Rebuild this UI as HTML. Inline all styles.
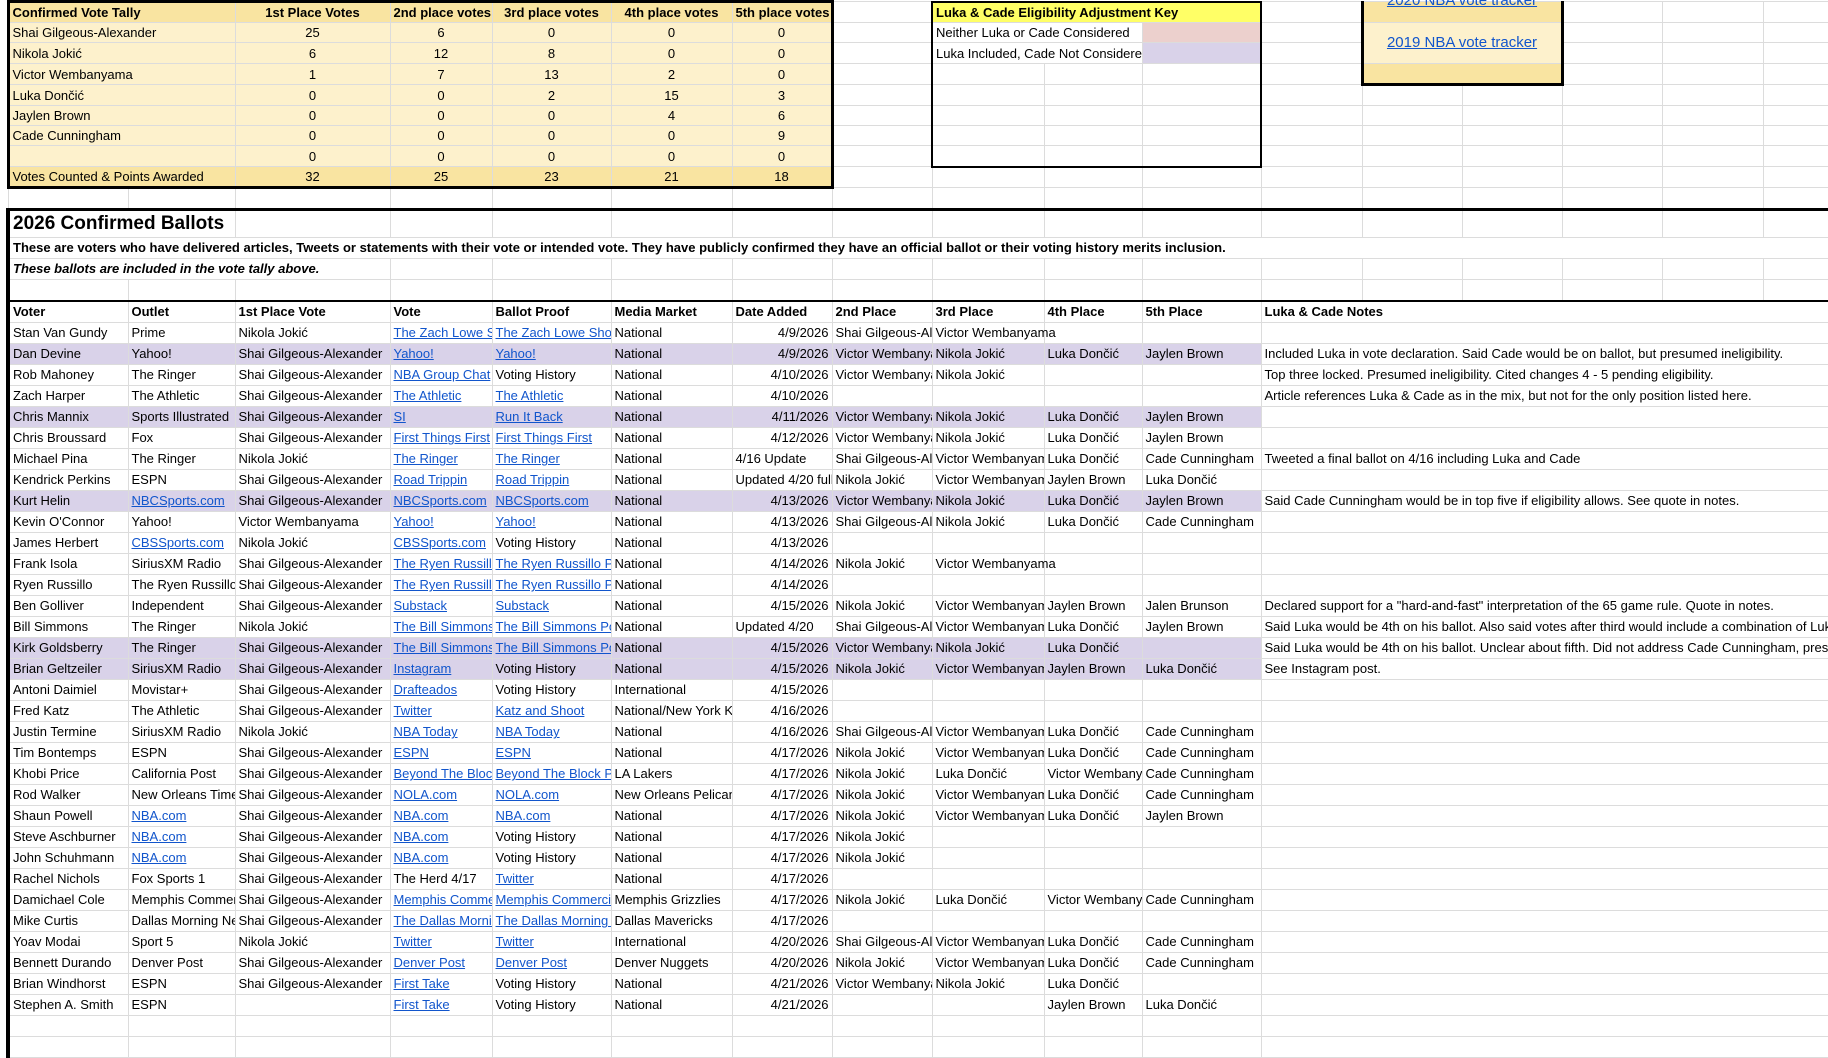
<!DOCTYPE html>
<html><head><meta charset="utf-8">
<style>
body{margin:0;width:1828px;height:1050px;overflow:hidden;background:#fff;position:relative}
table{position:absolute;left:6px;top:0;border-collapse:collapse;table-layout:fixed;width:1822px}
td{height:20px;border:1px solid #dcdcdc;padding:0 3px;white-space:nowrap;overflow:hidden;font:13px "Liberation Sans",Arial,sans-serif;line-height:20px;color:#000;vertical-align:bottom}
tr.tp td{height:19.2px;line-height:19px}
.l{color:#1155cc;text-decoration:underline}
.r{text-align:right}.c{text-align:center}.b{font-weight:bold}.i{font-style:italic}
.o{overflow:visible}
.dy{background:#f9e4a1}.ly{background:#fdf1cc}
.ky{background:#ffff66}
.pk{background:#ecd0cd}.lv{background:#d9d2e9}
.v td{background:#d9d2e9}.v td.n{background:#fff}
.tl{border-left:3px solid #000}.tr{border-right:3px solid #000}.tt{border-top:3px solid #000}.tb{border-bottom:3px solid #000}
.kl{border-left:2px solid #000}.kr{border-right:2px solid #000}.kt{border-top:2px solid #000}.kb{border-bottom:2px solid #000}
.L{border-left:4px solid #000}
.title td{height:26px;border-top:3px solid #000;vertical-align:middle}
.hd td{border-top:2px solid #000;font-weight:bold}
</style></head><body>
<table>
<colgroup><col style="width:120px"><col style="width:107px"><col style="width:155px"><col style="width:102px"><col style="width:119px"><col style="width:121px"><col style="width:100px"><col style="width:100px"><col style="width:112px"><col style="width:98px"><col style="width:119px"><col style="width:101px"><col style="width:100px"><col style="width:100px"><col style="width:100px"><col style="width:101px"><col style="width:67px"></colgroup>
<tr class="tp"><td colspan="2" class="dy b tl tt">Confirmed Vote Tally</td><td class="dy b c tt">1st Place Votes</td><td class="dy b tt">2nd place votes</td><td class="dy b c tt">3rd place votes</td><td class="dy b c tt">4th place votes</td><td class="dy b tt tr">5th place votes</td><td></td><td colspan="3" class="ky b kl kr kt">Luka &amp; Cade Eligibility Adjustment Key</td><td></td><td colspan="2" class="dy c tl tr" style="overflow:visible"><span class="l" style="font-size:15px;position:relative;top:-12px">2020 NBA vote tracker</span></td><td></td><td></td><td></td></tr>
<tr class="tp"><td colspan="2" class="ly tl">Shai Gilgeous-Alexander</td><td class="ly c">25</td><td class="ly c">6</td><td class="ly c">0</td><td class="ly c">0</td><td class="ly c tr">0</td><td></td><td colspan="2" class="kl">Neither Luka or Cade Considered</td><td class="pk kr"></td><td></td><td colspan="2" rowspan="2" class="ly c tl tr" style="vertical-align:middle"><span class="l" style="font-size:15px">2019 NBA vote tracker</span></td><td></td><td></td><td></td></tr>
<tr class="tp"><td colspan="2" class="ly tl">Nikola Jokić</td><td class="ly c">6</td><td class="ly c">12</td><td class="ly c">8</td><td class="ly c">0</td><td class="ly c tr">0</td><td></td><td colspan="2" class="kl">Luka Included, Cade Not Considered</td><td class="lv kr"></td><td></td><td></td><td></td><td></td></tr>
<tr class="tp"><td colspan="2" class="ly tl">Victor Wembanyama</td><td class="ly c">1</td><td class="ly c">7</td><td class="ly c">13</td><td class="ly c">2</td><td class="ly c tr">0</td><td></td><td class="kl"></td><td></td><td class="kr"></td><td></td><td colspan="2" class="dy tl tr tb"></td><td></td><td></td><td></td></tr>
<tr class="tp"><td colspan="2" class="ly tl">Luka Dončić</td><td class="ly c">0</td><td class="ly c">0</td><td class="ly c">2</td><td class="ly c">15</td><td class="ly c tr">3</td><td></td><td class="kl"></td><td></td><td class="kr"></td><td></td><td></td><td></td><td></td><td></td><td></td></tr>
<tr class="tp"><td colspan="2" class="ly tl">Jaylen Brown</td><td class="ly c">0</td><td class="ly c">0</td><td class="ly c">0</td><td class="ly c">4</td><td class="ly c tr">6</td><td></td><td class="kl"></td><td></td><td class="kr"></td><td></td><td></td><td></td><td></td><td></td><td></td></tr>
<tr class="tp"><td colspan="2" class="ly tl">Cade Cunningham</td><td class="ly c">0</td><td class="ly c">0</td><td class="ly c">0</td><td class="ly c">0</td><td class="ly c tr">9</td><td></td><td class="kl"></td><td></td><td class="kr"></td><td></td><td></td><td></td><td></td><td></td><td></td></tr>
<tr class="tp"><td colspan="2" class="ly tl"></td><td class="ly c">0</td><td class="ly c">0</td><td class="ly c">0</td><td class="ly c">0</td><td class="ly c tr">0</td><td></td><td class="kl kb"></td><td class="kb"></td><td class="kr kb"></td><td></td><td></td><td></td><td></td><td></td><td></td></tr>
<tr class="tp"><td colspan="2" class="dy tl tb">Votes Counted &amp; Points Awarded</td><td class="dy c tb">32</td><td class="dy c tb">25</td><td class="dy c tb">23</td><td class="dy c tb">21</td><td class="dy c tr tb">18</td><td></td><td></td><td></td><td></td><td></td><td></td><td></td><td></td><td></td><td></td></tr>
<tr class="tp"><td></td><td></td><td></td><td></td><td></td><td></td><td></td><td></td><td></td><td></td><td></td><td></td><td></td><td></td><td></td><td></td><td></td></tr>
<tr class="title"><td colspan="2" class="L b o" style="font-size:19px">2026 Confirmed Ballots</td><td></td><td></td><td></td><td></td><td></td><td></td><td></td><td></td><td></td><td></td><td></td><td></td><td></td><td></td><td></td></tr>
<tr><td colspan="17" class="L b">These are voters who have delivered articles, Tweets or statements with their vote or intended vote. They have publicly confirmed they have an official ballot or their voting history merits inclusion.</td></tr>
<tr><td colspan="3" class="L b i">These ballots are included in the vote tally above.</td><td></td><td></td><td></td><td></td><td></td><td></td><td></td><td></td><td></td><td></td><td></td><td></td><td></td><td></td></tr>
<tr><td class="L"></td><td></td><td></td><td></td><td></td><td></td><td></td><td></td><td></td><td></td><td></td><td></td><td></td><td></td><td></td><td></td><td></td></tr>
<tr class="hd"><td class="L">Voter</td><td>Outlet</td><td>1st Place Vote</td><td>Vote</td><td>Ballot Proof</td><td>Media Market</td><td>Date Added</td><td>2nd Place</td><td>3rd Place</td><td>4th Place</td><td>5th Place</td><td colspan="7">Luka &amp; Cade Notes</td></tr>

<tr><td class="L">Stan Van Gundy</td><td>Prime</td><td>Nikola Jokić</td><td class="l">The Zach Lowe Show</td><td class="l">The Zach Lowe Show</td><td>National</td><td class="r">4/9/2026</td><td>Shai Gilgeous-Alexander</td><td class="o">Victor Wembanyama</td><td></td><td></td><td colspan="7"></td></tr>
<tr class="v"><td class="L">Dan Devine</td><td>Yahoo!</td><td>Shai Gilgeous-Alexander</td><td class="l">Yahoo!</td><td class="l">Yahoo!</td><td>National</td><td class="r">4/9/2026</td><td>Victor Wembanyama</td><td>Nikola Jokić</td><td>Luka Dončić</td><td>Jaylen Brown</td><td colspan="7" class="n">Included Luka in vote declaration. Said Cade would be on ballot, but presumed ineligibility.</td></tr>
<tr><td class="L">Rob Mahoney</td><td>The Ringer</td><td>Shai Gilgeous-Alexander</td><td class="l">NBA Group Chat</td><td>Voting History</td><td>National</td><td class="r">4/10/2026</td><td>Victor Wembanyama</td><td>Nikola Jokić</td><td></td><td></td><td colspan="7">Top three locked. Presumed ineligibility. Cited changes 4 - 5 pending eligibility.</td></tr>
<tr><td class="L">Zach Harper</td><td>The Athletic</td><td>Shai Gilgeous-Alexander</td><td class="l">The Athletic</td><td class="l">The Athletic</td><td>National</td><td class="r">4/10/2026</td><td></td><td></td><td></td><td></td><td colspan="7">Article references Luka &amp; Cade as in the mix, but not for the only position listed here.</td></tr>
<tr class="v"><td class="L">Chris Mannix</td><td>Sports Illustrated</td><td>Shai Gilgeous-Alexander</td><td class="l">SI</td><td class="l">Run It Back</td><td>National</td><td class="r">4/11/2026</td><td>Victor Wembanyama</td><td>Nikola Jokić</td><td>Luka Dončić</td><td>Jaylen Brown</td><td colspan="7" class="n"></td></tr>
<tr><td class="L">Chris Broussard</td><td>Fox</td><td>Shai Gilgeous-Alexander</td><td class="l">First Things First</td><td class="l">First Things First</td><td>National</td><td class="r">4/12/2026</td><td>Victor Wembanyama</td><td>Nikola Jokić</td><td>Luka Dončić</td><td>Jaylen Brown</td><td colspan="7"></td></tr>
<tr><td class="L">Michael Pina</td><td>The Ringer</td><td>Nikola Jokić</td><td class="l">The Ringer</td><td class="l">The Ringer</td><td>National</td><td>4/16 Update</td><td>Shai Gilgeous-Alexander</td><td>Victor Wembanyama</td><td>Luka Dončić</td><td>Cade Cunningham</td><td colspan="7">Tweeted a final ballot on 4/16 including Luka and Cade</td></tr>
<tr><td class="L">Kendrick Perkins</td><td>ESPN</td><td>Shai Gilgeous-Alexander</td><td class="l">Road Trippin</td><td class="l">Road Trippin</td><td>National</td><td>Updated 4/20 full ballot</td><td>Nikola Jokić</td><td>Victor Wembanyama</td><td>Jaylen Brown</td><td>Luka Dončić</td><td colspan="7"></td></tr>
<tr class="v"><td class="L">Kurt Helin</td><td class="l">NBCSports.com</td><td>Shai Gilgeous-Alexander</td><td class="l">NBCSports.com</td><td class="l">NBCSports.com</td><td>National</td><td class="r">4/13/2026</td><td>Victor Wembanyama</td><td>Nikola Jokić</td><td>Luka Dončić</td><td>Jaylen Brown</td><td colspan="7" class="n">Said Cade Cunningham would be in top five if eligibility allows. See quote in notes.</td></tr>
<tr><td class="L">Kevin O'Connor</td><td>Yahoo!</td><td>Victor Wembanyama</td><td class="l">Yahoo!</td><td class="l">Yahoo!</td><td>National</td><td class="r">4/13/2026</td><td>Shai Gilgeous-Alexander</td><td>Nikola Jokić</td><td>Luka Dončić</td><td>Cade Cunningham</td><td colspan="7"></td></tr>
<tr><td class="L">James Herbert</td><td class="l">CBSSports.com</td><td>Nikola Jokić</td><td class="l">CBSSports.com</td><td>Voting History</td><td>National</td><td class="r">4/13/2026</td><td></td><td></td><td></td><td></td><td colspan="7"></td></tr>
<tr><td class="L">Frank Isola</td><td>SiriusXM Radio</td><td>Shai Gilgeous-Alexander</td><td class="l">The Ryen Russillo Podcast</td><td class="l">The Ryen Russillo Podcast</td><td>National</td><td class="r">4/14/2026</td><td>Nikola Jokić</td><td class="o">Victor Wembanyama</td><td></td><td></td><td colspan="7"></td></tr>
<tr><td class="L">Ryen Russillo</td><td>The Ryen Russillo Podcast</td><td>Shai Gilgeous-Alexander</td><td class="l">The Ryen Russillo Podcast</td><td class="l">The Ryen Russillo Podcast</td><td>National</td><td class="r">4/14/2026</td><td></td><td></td><td></td><td></td><td colspan="7"></td></tr>
<tr><td class="L">Ben Golliver</td><td>Independent</td><td>Shai Gilgeous-Alexander</td><td class="l">Substack</td><td class="l">Substack</td><td>National</td><td class="r">4/15/2026</td><td>Nikola Jokić</td><td>Victor Wembanyama</td><td>Jaylen Brown</td><td>Jalen Brunson</td><td colspan="7">Declared support for a "hard-and-fast" interpretation of the 65 game rule. Quote in notes.</td></tr>
<tr><td class="L">Bill Simmons</td><td>The Ringer</td><td>Nikola Jokić</td><td class="l">The Bill Simmons Podcast</td><td class="l">The Bill Simmons Podcast</td><td>National</td><td>Updated 4/20</td><td>Shai Gilgeous-Alexander</td><td>Victor Wembanyama</td><td>Luka Dončić</td><td>Jaylen Brown</td><td colspan="7">Said Luka would be 4th on his ballot. Also said votes after third would include a combination of Luka and Cade</td></tr>
<tr class="v"><td class="L">Kirk Goldsberry</td><td>The Ringer</td><td>Shai Gilgeous-Alexander</td><td class="l">The Bill Simmons Podcast</td><td class="l">The Bill Simmons Podcast</td><td>National</td><td class="r">4/15/2026</td><td>Victor Wembanyama</td><td>Nikola Jokić</td><td>Luka Dončić</td><td></td><td colspan="7" class="n">Said Luka would be 4th on his ballot. Unclear about fifth. Did not address Cade Cunningham, presumably</td></tr>
<tr class="v"><td class="L">Brian Geltzeiler</td><td>SiriusXM Radio</td><td>Shai Gilgeous-Alexander</td><td class="l">Instagram</td><td>Voting History</td><td>National</td><td class="r">4/15/2026</td><td>Nikola Jokić</td><td>Victor Wembanyama</td><td>Jaylen Brown</td><td>Luka Dončić</td><td colspan="7" class="n">See Instagram post.</td></tr>
<tr><td class="L">Antoni Daimiel</td><td>Movistar+</td><td>Shai Gilgeous-Alexander</td><td class="l">Drafteados</td><td>Voting History</td><td>International</td><td class="r">4/15/2026</td><td></td><td></td><td></td><td></td><td colspan="7"></td></tr>
<tr><td class="L">Fred Katz</td><td>The Athletic</td><td>Shai Gilgeous-Alexander</td><td class="l">Twitter</td><td class="l">Katz and Shoot</td><td>National/New York Knicks</td><td class="r">4/16/2026</td><td></td><td></td><td></td><td></td><td colspan="7"></td></tr>
<tr><td class="L">Justin Termine</td><td>SiriusXM Radio</td><td>Nikola Jokić</td><td class="l">NBA Today</td><td class="l">NBA Today</td><td>National</td><td class="r">4/16/2026</td><td>Shai Gilgeous-Alexander</td><td>Victor Wembanyama</td><td>Luka Dončić</td><td>Cade Cunningham</td><td colspan="7"></td></tr>
<tr><td class="L">Tim Bontemps</td><td>ESPN</td><td>Shai Gilgeous-Alexander</td><td class="l">ESPN</td><td class="l">ESPN</td><td>National</td><td class="r">4/17/2026</td><td>Nikola Jokić</td><td>Victor Wembanyama</td><td>Luka Dončić</td><td>Cade Cunningham</td><td colspan="7"></td></tr>
<tr><td class="L">Khobi Price</td><td>California Post</td><td>Shai Gilgeous-Alexander</td><td class="l">Beyond The Block</td><td class="l">Beyond The Block Podcast</td><td>LA Lakers</td><td class="r">4/17/2026</td><td>Nikola Jokić</td><td>Luka Dončić</td><td>Victor Wembanyama</td><td>Cade Cunningham</td><td colspan="7"></td></tr>
<tr><td class="L">Rod Walker</td><td>New Orleans Times-Picayune</td><td>Shai Gilgeous-Alexander</td><td class="l">NOLA.com</td><td class="l">NOLA.com</td><td>New Orleans Pelicans</td><td class="r">4/17/2026</td><td>Nikola Jokić</td><td>Victor Wembanyama</td><td>Luka Dončić</td><td>Cade Cunningham</td><td colspan="7"></td></tr>
<tr><td class="L">Shaun Powell</td><td class="l">NBA.com</td><td>Shai Gilgeous-Alexander</td><td class="l">NBA.com</td><td class="l">NBA.com</td><td>National</td><td class="r">4/17/2026</td><td>Nikola Jokić</td><td>Victor Wembanyama</td><td>Luka Dončić</td><td>Jaylen Brown</td><td colspan="7"></td></tr>
<tr><td class="L">Steve Aschburner</td><td class="l">NBA.com</td><td>Shai Gilgeous-Alexander</td><td class="l">NBA.com</td><td>Voting History</td><td>National</td><td class="r">4/17/2026</td><td>Nikola Jokić</td><td></td><td></td><td></td><td colspan="7"></td></tr>
<tr><td class="L">John Schuhmann</td><td class="l">NBA.com</td><td>Shai Gilgeous-Alexander</td><td class="l">NBA.com</td><td>Voting History</td><td>National</td><td class="r">4/17/2026</td><td>Nikola Jokić</td><td></td><td></td><td></td><td colspan="7"></td></tr>
<tr><td class="L">Rachel Nichols</td><td>Fox Sports 1</td><td>Shai Gilgeous-Alexander</td><td>The Herd 4/17</td><td class="l">Twitter</td><td>National</td><td class="r">4/17/2026</td><td></td><td></td><td></td><td></td><td colspan="7"></td></tr>
<tr><td class="L">Damichael Cole</td><td>Memphis Commercial Appeal</td><td>Shai Gilgeous-Alexander</td><td class="l">Memphis Commercial Appeal</td><td class="l">Memphis Commercial Appeal</td><td>Memphis Grizzlies</td><td class="r">4/17/2026</td><td>Nikola Jokić</td><td>Luka Dončić</td><td>Victor Wembanyama</td><td>Cade Cunningham</td><td colspan="7"></td></tr>
<tr><td class="L">Mike Curtis</td><td>Dallas Morning News</td><td>Shai Gilgeous-Alexander</td><td class="l">The Dallas Morning News</td><td class="l">The Dallas Morning News</td><td>Dallas Mavericks</td><td class="r">4/17/2026</td><td></td><td></td><td></td><td></td><td colspan="7"></td></tr>
<tr><td class="L">Yoav Modai</td><td>Sport 5</td><td>Nikola Jokić</td><td class="l">Twitter</td><td class="l">Twitter</td><td>International</td><td class="r">4/20/2026</td><td>Shai Gilgeous-Alexander</td><td>Victor Wembanyama</td><td>Luka Dončić</td><td>Cade Cunningham</td><td colspan="7"></td></tr>
<tr><td class="L">Bennett Durando</td><td>Denver Post</td><td>Shai Gilgeous-Alexander</td><td class="l">Denver Post</td><td class="l">Denver Post</td><td>Denver Nuggets</td><td class="r">4/20/2026</td><td>Nikola Jokić</td><td>Victor Wembanyama</td><td>Luka Dončić</td><td>Cade Cunningham</td><td colspan="7"></td></tr>
<tr><td class="L">Brian Windhorst</td><td>ESPN</td><td>Shai Gilgeous-Alexander</td><td class="l">First Take</td><td>Voting History</td><td>National</td><td class="r">4/21/2026</td><td>Victor Wembanyama</td><td>Nikola Jokić</td><td>Luka Dončić</td><td></td><td colspan="7"></td></tr>
<tr><td class="L">Stephen A. Smith</td><td>ESPN</td><td></td><td class="l">First Take</td><td>Voting History</td><td>National</td><td class="r">4/21/2026</td><td></td><td></td><td>Jaylen Brown</td><td>Luka Dončić</td><td colspan="7"></td></tr>
<tr><td class="L"></td><td></td><td></td><td></td><td></td><td></td><td></td><td></td><td></td><td></td><td></td><td colspan="7"></td></tr>
<tr><td class="L"></td><td></td><td></td><td></td><td></td><td></td><td></td><td></td><td></td><td></td><td></td><td colspan="7"></td></tr>
</table>
</body></html>
